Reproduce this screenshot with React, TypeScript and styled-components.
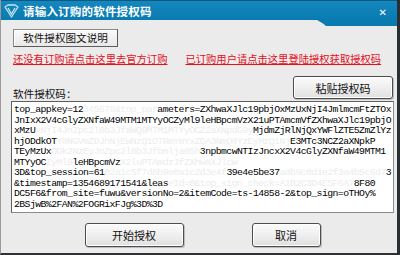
import React from "react";
import styled, { createGlobalStyle } from "styled-components";

const Global = createGlobalStyle`
  html, body { margin: 0; padding: 0; background: #ebebeb; }
  body { font-family: "Noto Sans CJK SC", "Noto Sans", sans-serif; }
`;

const Window = styled.div`
  position: relative;
  width: 400px;
  height: 255px;
  box-sizing: border-box;
  background: #ebebeb;
  border-left: 1px solid #9a9a9a;
  border-right: 3px solid #2a2f33;
  border-bottom: 2px solid #2f3134;
  display: flex;
  flex-direction: column;
  overflow: hidden;
`;

const TitleBar = styled.div`
  position: relative;
  height: 20px;
  flex: none;
  display: flex;
  align-items: center;
  padding: 0 10px 0 3px;
  background: linear-gradient(#1587bf, #0a7bb0);
  border-top: 1px solid #0b5a80;
  box-sizing: border-box;
  &::after {
    content: "";
    position: absolute;
    right: 0;
    top: 19px;
    width: 80px;
    height: 6px;
    background: #0a7bb0;
    clip-path: polygon(0 0, 100% 0, 100% 100%, 9px 100%, 6px 60%);
  }
`;

const IconBox = styled.svg`
  width: 15px;
  height: 14px;
  flex: none;
  margin-right: 4px;
`;

const Title = styled.div`
  color: #ffffff;
  font-weight: 700;
  font-size: 11.5px;
  line-height: 14px;
  letter-spacing: 0.2px;
  flex: 1;
`;

const Close = styled.div`
  color: #ffffff;
  font-family: "DejaVu Sans", sans-serif;
  font-weight: 700;
  font-size: 10px;
  line-height: 10px;
  margin-top: 5px;
`;

const Body = styled.div`
  flex: 1;
  display: flex;
  flex-direction: column;
  padding: 9px 3px 0 10px;
  color: #111;
`;

const PlainButton = styled.button`
  align-self: flex-start;
  margin-left: 2px;
  width: 105px;
  height: 18px;
  padding: 0;
  border: 1px solid #5c5c5c;
  border-top-color: #8a8a8a;
  border-left-color: #8a8a8a;
  background: linear-gradient(#fafafa, #e8e8e8);
  box-shadow: inset 1px 1px 0 #ffffff;
  font-family: "Noto Sans CJK SC", sans-serif;
  font-size: 10.6px;
  line-height: 16px;
  color: #111;
`;

const LinkRow = styled.div`
  display: flex;
  gap: 18px;
  margin-top: 5px;
  padding-left: 2px;
  height: 13px;
`;

const RedLink = styled.a`
  color: #e3101c;
  font-size: 10.3px;
  line-height: 13px;
  text-decoration: underline;
  text-underline-offset: 1px;
  white-space: nowrap;
  cursor: pointer;
`;

const LabelRow = styled.div`
  display: flex;
  align-items: flex-end;
  justify-content: space-between;
  margin-top: 11px;
`;

const FieldLabel = styled.div`
  margin-left: 2px;
  margin-bottom: -1px;
  font-size: 10.6px;
  line-height: 13px;
  color: #111;
`;

const RoundButton = styled.button<{ $w: number; $h: number }>`
  width: ${(p) => p.$w}px;
  height: ${(p) => p.$h}px;
  padding: 0;
  border: 1px solid #4c4c4c;
  border-radius: 3px;
  background: linear-gradient(#fbfbfb 0%, #efefef 50%, #e0e0e0 100%);
  box-shadow: inset 0 0 0 1px #ffffff, 1px 1px 0 #bdbdbd;
  font-family: "Noto Sans CJK SC", sans-serif;
  font-size: 11px;
  color: #111;
  flex: none;
`;

const PasteButton = styled(RoundButton)`
  margin-right: 1px;
`;

const CodeBox = styled.div`
  margin-top: 2px;
  height: 112px;
  box-sizing: border-box;
  background: #ffffff;
  border: 1px solid #8c8c8c;
  border-top-color: #5e5e5e;
  border-left-color: #5e5e5e;
  padding: 3px 0 0 2px;
  font-family: "Liberation Mono", "DejaVu Sans Mono", monospace;
  font-size: 9.8px;
  line-height: 10.55px;
  letter-spacing: -0.57px;
  color: #000;
  white-space: pre;
  overflow: hidden;
`;

const CodeLine = styled.div``;

const Faded = styled.span`
  color: #ececec;
`;

const ActionRow = styled.div`
  display: flex;
  justify-content: center;
  gap: 68px;
  margin-top: 10px;
`;

type Seg = [string, boolean];

const lines: Seg[][] = [
  [["top_appkey=12", false], ["345678&top_par", true], ["ameters=ZXhwaXJlc19pbjOxMzUxNjI4JmlmcmFtZTOx", false]],
  [["JnIxX2V4cGlyZXNfaW49MTM1MTYyOCZyMl9leHBpcmVzX21uPTAmcmVfZXhwaXJlc19pbjO", false]],
  [["xMzU", false], ["xNjI4JnZpc2l0b3JfaWQ9MTM1MTYyOCZ2aXNpdG9y", true], ["MjdmZjRlNjQxYWFlZTE5ZmZlYz", false]],
  [["hjODdkOT", false], ["Y0NGVmZDJhNjEwNzQ1OTRmYmYxZDA3NmQ0YzEyMzQ1Nj", true], ["E3MTc3NCZ2aXNpkP", false]],
  [["TEyMzUx", false], ["ODk2NzEyJnZpc2l0b3Jfbmlja05h", true], ["3npbmcwNTIzJncxX2V4cGlyZXNfaW49MTM1", false]],
  [["MTYyOC", false], ["ZyMl9", true], ["leHBpcmVz", false], ["X2luPTAmdzJfZXhwaXJlcw", true]],
  [["3D&top_session=61", false], ["02a1c5f7d8b9e0a1c2d3e4f", true], ["39e4e5be37", false], ["a8b9c0d1e2f3a4b5c6d7", true], ["3", false]],
  [["&timestamp=1354689171541&leas", false], ["eId=0&top_sign_check=A1B2C3D4E5F6A7", true], ["8F80", false]],
  [["DC5F6&from_site=fuwu&versionNo=2&itemCode=ts-14858-2&top_sign=oTHOy%", false]],
  [["2BSjwB%2FAN%2FOGRixFJg%3D%3D", false]],
];

export default function App() {
  return (
    <>
      <Global />
      <Window>
        <TitleBar>
          <IconBox viewBox="0 0 15 14">
            <path d="M1 3 L7.5 13 L14 3 L11 1 L4 1 Z" fill="none" stroke="#bfe6f5" strokeWidth="1.3" strokeLinejoin="round" />
            <path d="M4 4 L7.5 10 L11 4" fill="none" stroke="#e8f7fd" strokeWidth="1.1" />
          </IconBox>
          <Title>请输入订购的软件授权码</Title>
          <Close>✕</Close>
        </TitleBar>
        <Body>
          <PlainButton>软件授权图文说明</PlainButton>
          <LinkRow>
            <RedLink>还没有订购请点击这里去官方订购</RedLink>
            <RedLink>已订购用户请点击这里登陆授权获取授权码</RedLink>
          </LinkRow>
          <LabelRow>
            <FieldLabel>软件授权码：</FieldLabel>
            <PasteButton $w={100} $h={23}>粘贴授权码</PasteButton>
          </LabelRow>
          <CodeBox>
            {lines.map((segs, i) => (
              <CodeLine key={i}>
                {segs.map(([t, f], j) => (f ? <Faded key={j}>{t}</Faded> : <span key={j}>{t}</span>))}
              </CodeLine>
            ))}
          </CodeBox>
          <ActionRow>
            <RoundButton $w={99} $h={24}>开始授权</RoundButton>
            <RoundButton $w={69} $h={24}>取消</RoundButton>
          </ActionRow>
        </Body>
      </Window>
    </>
  );
}
